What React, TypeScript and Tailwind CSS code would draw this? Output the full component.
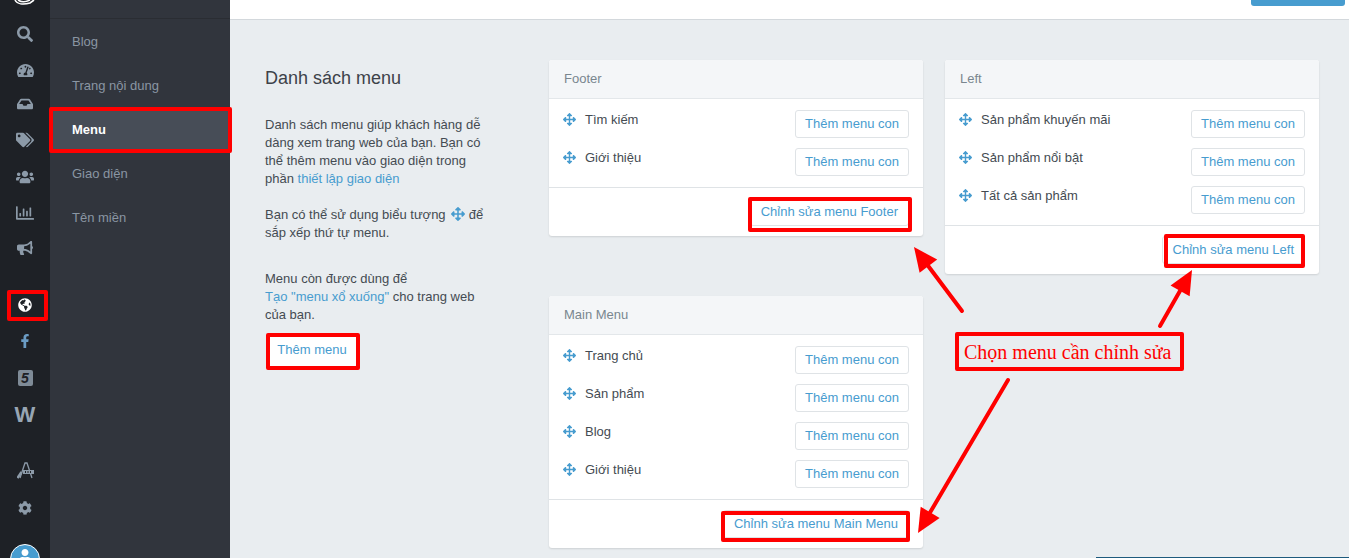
import React from 'react';
import {
  FaSearch,
  FaTachometerAlt,
  FaInbox,
  FaTags,
  FaUsers,
  FaRegChartBar,
  FaBullhorn,
  FaGlobeAmericas,
  FaFacebookF,
  FaCog,
  FaUser,
  FaArrowsAlt,
} from 'react-icons/fa';

const topIcons = [
  { Icon: FaSearch, size: 'w-4 h-4' },
  { Icon: FaTachometerAlt, size: 'w-[17px] h-[17px]' },
  { Icon: FaInbox, size: 'w-4 h-4 -mt-[3px]' },
  { Icon: FaTags, size: 'w-[18px] h-[18px] -mt-[2px]' },
  { Icon: FaUsers, size: 'w-[18px] h-[18px]' },
  { Icon: FaRegChartBar, size: 'w-[18px] h-[18px]' },
  { Icon: FaBullhorn, size: 'w-4 h-4' },
];
const navItems = ['Blog', 'Trang nội dung', 'Menu', 'Giao diện', 'Tên miền'];

function MenuCard({ title, items }: { title: string; items: string[] }) {
  return (
    <div className="w-[374px] bg-white rounded-[3px] shadow-[0_1px_2px_rgba(0,0,0,0.12)]">
      <div className="h-[39px] px-[15px] flex items-center bg-[#f4f6f8] border-b border-[#e3e7ea] rounded-t-[3px] text-[#79868f]">
        {title}
      </div>
      <div className="px-[14px] py-[11px] flex flex-col gap-[10px] border-b border-[#dfe3e6]">
        {items.map(item => (
          <div key={item} className="flex justify-between h-7">
            <div className="flex items-center gap-[9px] h-[18px]">
              <FaArrowsAlt className="w-[13px] h-[13px] text-[#479ccf]" />
              <span className="mt-[2px]">{item}</span>
            </div>
            <button className="w-[114px] h-7 bg-white border border-[#dfe3e6] rounded-[3px] text-[#479ccf]">
              Thêm menu con
            </button>
          </div>
        ))}
      </div>
      <div className="h-[48px] px-[14px] flex justify-end items-center">
        <button className="h-7 px-[10px] mt-[-1px] bg-white border border-[#dfe3e6] rounded-[3px] text-[#479ccf]">
          Chỉnh sửa menu {title}
        </button>
      </div>
    </div>
  );
}

function Arrow({ x1, y1, x2, y2 }: { x1: number; y1: number; x2: number; y2: number }) {
  const len = Math.hypot(x2 - x1, y2 - y1);
  const ux = (x2 - x1) / len;
  const uy = (y2 - y1) / len;
  const bx = x2 - ux * 24;
  const by = y2 - uy * 24;
  const head = `${x2},${y2} ${bx - uy * 11},${by + ux * 11} ${bx + uy * 11},${by - ux * 11}`;
  return (
    <>
      <line x1={x1} y1={y1} x2={bx} y2={by} stroke="#ff0000" strokeWidth={4} strokeLinecap="round" />
      <polygon points={head} fill="#ff0000" />
    </>
  );
}

function Annotations() {
  return (
    <div className="absolute inset-0 pointer-events-none">
      <div className="absolute left-[49px] top-[107px] w-[183px] h-[46px] border-4 border-[#ff0000] rounded-[2px]" />
      <div className="absolute left-[7px] top-[290px] w-[41px] h-[31px] border-4 border-[#ff0000] rounded-[2px]" />
      <div className="absolute left-[266px] top-[333px] w-[94px] h-[37px] border-4 border-[#ff0000] rounded-[2px]" />
      <div className="absolute left-[748px] top-[197px] w-[164px] h-[35px] border-4 border-[#ff0000] rounded-[2px]" />
      <div className="absolute left-[1164px] top-[234px] w-[141px] h-[34px] border-4 border-[#ff0000] rounded-[2px]" />
      <div className="absolute left-[721px] top-[511px] w-[189px] h-[31px] border-4 border-[#ff0000] rounded-[2px]" />
      <div className="absolute left-[955px] top-[332px] w-[229px] h-[39px] border-4 border-[#ff0000] rounded-[2px] flex items-center pl-[5px] font-['Liberation_Serif',serif] text-[20px] text-[#ff0000] whitespace-nowrap">
        Chọn menu cần chỉnh sửa
      </div>
      <svg className="absolute inset-0" width="1349" height="558">
        <Arrow x1={962} y1={311} x2={914} y2={247} />
        <Arrow x1={1160} y1={326} x2={1192} y2={270} />
        <Arrow x1={1008} y1={380} x2={918} y2={533} />
      </svg>
    </div>
  );
}

export default function App() {
  return (
    <div className="relative flex w-[1349px] h-[558px] overflow-hidden bg-[#e9edf0] font-['Liberation_Sans',Arial,sans-serif] text-[13px] leading-[18px] text-[#444b52]">
      {/* Icon rail */}
      <div className="w-[50px] shrink-0 bg-[#1e2126] flex flex-col items-center text-[#8c9aa8]">
        <div className="h-[16.5px] w-full shrink-0 flex justify-center overflow-hidden">
          <svg width="22" height="6" viewBox="0 0 22 6" fill="none" stroke="#ffffff" strokeWidth="1.6" className="shrink-0">
            <path d="M1 0 C3 4 9 5 16 3 L20 0" />
            <path d="M4 0 C7 2 12 2 16 0" />
          </svg>
        </div>
        {topIcons.map(({ Icon, size }, i) => (
          <div key={i} className="w-full h-[35.7px] shrink-0 flex items-center justify-center">
            <Icon className={size} />
          </div>
        ))}
        <div className="w-full h-[36px] shrink-0 mt-[21px] flex items-center justify-center text-white">
          <FaGlobeAmericas className="w-[14px] h-[14px]" />
        </div>
        <div className="w-full h-[36px] shrink-0 flex items-center justify-center text-[#6b9cc4]">
          <FaFacebookF className="w-[14px] h-[14px]" />
        </div>
        <div className="w-full h-[38px] shrink-0 flex items-center justify-center">
          <span className="w-[15px] h-4 rounded-[2px] bg-[#7f8b97] text-[#1e2126] text-[14px] leading-[16px] text-center font-bold italic">
            5
          </span>
        </div>
        <div className="w-full h-[36px] shrink-0 flex items-center justify-center text-[#98a6b4] text-[22px] font-bold">
          W
        </div>
        <div className="w-full h-[36px] shrink-0 mt-[19px] flex items-center justify-center">
          <svg width="17" height="17" viewBox="0 0 17 17" fill="none" stroke="#8c9aa8" strokeWidth="1.3">
            <path d="M3 16 L8 1 L10 1 L15 16" />
            <path d="M0.5 16 L4.5 10" strokeWidth="2.4" />
            <rect x="6" y="8" width="11" height="4" fill="#8c9aa8" stroke="none" />
            <path d="M8.5 9 V11 M11 9 V11 M13.5 9 V11" stroke="#1e2126" strokeWidth="1" />
          </svg>
        </div>
        <div className="w-full h-[38px] shrink-0 mt-[1px] flex items-center justify-center text-[#8c9aa8]">
          <FaCog className="w-[14px] h-[14px]" />
        </div>
        <div className="w-[30px] h-[30px] shrink-0 mt-[16.5px] rounded-full bg-[#479ccf] border border-white flex items-start justify-center overflow-hidden">
          <FaUser className="w-[14px] h-[14px] mt-[4px] text-white" />
        </div>
      </div>

      {/* Section nav */}
      <div className="w-[180px] shrink-0 bg-[#31353d] text-[#8a96a3]">
        <div className="h-[19px] border-b border-[#2a2d33]" />
        {navItems.map(item =>
          item === 'Menu' ? (
            <div key={item} className="h-[44px] pl-[22px] pt-[2px] flex items-center bg-[#474d57] text-white font-bold">
              {item}
            </div>
          ) : (
            <div key={item} className="h-[44px] pl-[22px] pt-[2px] flex items-center">
              {item}
            </div>
          ),
        )}
      </div>

      {/* Content */}
      <div className="flex-1 min-w-0">
        <div className="h-5 bg-white border-b border-[#d3d8dc] flex justify-end pr-[4px]">
          <div className="w-[94px] h-[6px] bg-[#479ccf] rounded-b-[3px]" />
        </div>
        <div className="flex pt-[40px] pl-[35px]">
          <div className="w-[284px] pr-[60px]">
            <h2 className="mt-[6px] text-[18px] leading-[24px] text-[#3d4249]">Danh sách menu</h2>
            <p className="mt-[26px]">
              Danh sách menu giúp khách hàng dễ dàng xem trang web của bạn. Bạn có thể thêm menu vào giao diện trong
              phần <span className="text-[#479ccf]">thiết lập giao diện</span>
            </p>
            <p className="mt-[18px]">
              Bạn có thể sử dụng biểu tượng{' '}
              <FaArrowsAlt className="inline ml-[2px] w-[14px] h-[14px] text-[#479ccf] align-[-2px]" /> để sắp xếp thứ
              tự menu.
            </p>
            <p className="mt-[28px]">
              Menu còn được dùng để
              <br />
              <span className="text-[#479ccf]">Tạo "menu xổ xuống"</span> cho trang web của bạn.
            </p>
            <button className="mt-[11px] ml-[3px] w-[88px] h-[32px] pb-[2px] bg-white rounded-[3px] text-[#479ccf]">
              Thêm menu
            </button>
          </div>
          <div className="flex flex-col gap-[60px]">
            <MenuCard title="Footer" items={['Tìm kiếm', 'Giới thiệu']} />
            <MenuCard title="Main Menu" items={['Trang chủ', 'Sản phẩm', 'Blog', 'Giới thiệu']} />
          </div>
          <div className="ml-[22px]">
            <MenuCard title="Left" items={['Sản phẩm khuyến mãi', 'Sản phẩm nổi bật', 'Tất cả sản phẩm']} />
          </div>
        </div>
      </div>

      <Annotations />
      <div className="absolute left-[1096px] right-0 bottom-0 h-px bg-[#1d5a7d]" />
    </div>
  );
}
